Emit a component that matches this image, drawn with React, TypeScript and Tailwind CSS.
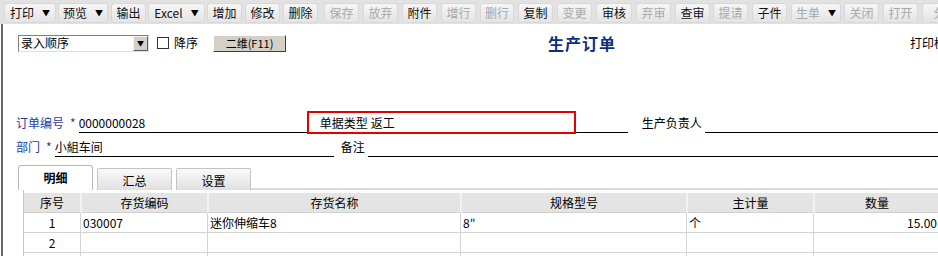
const font = { fontFamily: '"Noto Sans CJK SC", "Liberation Sans", sans-serif' };

type Btn = { label: string; w: number; ml: number; on: boolean; arrow?: boolean };

const buttons: Btn[] = [
  { label: "打印", w: 52, ml: 4, on: true, arrow: true },
  { label: "预览", w: 50, ml: 2, on: true, arrow: true },
  { label: "输出", w: 35, ml: 3, on: true },
  { label: "Excel", w: 57, ml: 2, on: true, arrow: true },
  { label: "增加", w: 35, ml: 2, on: true },
  { label: "修改", w: 35, ml: 3, on: true },
  { label: "删除", w: 35, ml: 3, on: true },
  { label: "保存", w: 35, ml: 6, on: false },
  { label: "放弃", w: 35, ml: 4, on: false },
  { label: "附件", w: 35, ml: 4, on: true },
  { label: "增行", w: 35, ml: 4, on: false },
  { label: "删行", w: 34, ml: 4, on: false },
  { label: "复制", w: 35, ml: 4, on: true },
  { label: "变更", w: 35, ml: 4, on: false },
  { label: "审核", w: 36, ml: 4, on: true },
  { label: "弃审", w: 35, ml: 4, on: false },
  { label: "查审", w: 35, ml: 4, on: true },
  { label: "提请", w: 35, ml: 3, on: false },
  { label: "子件", w: 35, ml: 4, on: true },
  { label: "生单", w: 50, ml: 4, on: false, arrow: true },
  { label: "关闭", w: 35, ml: 3, on: false },
  { label: "打开", w: 35, ml: 4, on: false },
  { label: "分", w: 35, ml: 4, on: false },
];

function ToolButton({ b }: { b: Btn }) {
  return (
    <div
      className="flex h-[20px] shrink-0 items-center justify-center gap-[8px] rounded-[3px] border border-[#d8d8d8] bg-gradient-to-b from-[#f6f6f6] to-[#e4e4e4] text-[12px] font-normal"
      style={{ width: b.w, marginLeft: b.ml }}
    >
      <span className={b.on ? "text-[#111]" : "text-[#a8a8a8]"}>{b.label}</span>
      {b.arrow && <span className="text-[8px] text-black">▼</span>}
    </div>
  );
}

const cols = [
  { title: "序号", w: 56 },
  { title: "存货编码", w: 127 },
  { title: "存货名称", w: 253 },
  { title: "规格型号", w: 226 },
  { title: "主计量", w: 127 },
  { title: "数量", w: 126 },
];

const rows = [
  ["1", "030007", "迷你伸缩车8", "8″", "个", "15.00"],
  ["2", "", "", "", "", ""],
  ["", "", "", "", "", ""],
];

export default function App() {
  return (
    <div className="h-[256px] w-[938px] overflow-hidden whitespace-nowrap bg-white text-[12px] text-black" style={font}>
      {/* toolbar */}
      <div className="flex h-[24px] items-center overflow-hidden bg-[#e2e2e2] pt-[1px]">
        {buttons.map((b) => (
          <ToolButton key={b.label} b={b} />
        ))}
      </div>

      <div className="relative ml-[1px] h-[232px] border-l-2 border-[#6a6a6a]">
        {/* top controls */}
        <div className="flex h-[30px] items-center pt-[8px]">
          <div className="ml-[15px] flex h-[17px] w-[131px] shrink-0 items-center border border-t-[#808080] border-l-[#808080] border-b-[#e0e0e0] border-r-[#e0e0e0] bg-white">
            <span className="flex-1 pl-[2px] leading-none">录入顺序</span>
            <span className="flex h-[15px] w-[15px] items-center justify-center border border-t-[#f4f4f4] border-l-[#f4f4f4] border-b-[#606060] border-r-[#606060] bg-[#d4d0c8] text-[7px]">▼</span>
          </div>
          <div className="ml-[8px] h-[12px] w-[12px] shrink-0 border border-[#333] bg-white" />
          <span className="ml-[5px] shrink-0">降序</span>
          <div className="ml-[15px] flex h-[17px] w-[73px] shrink-0 items-center justify-center border border-t-[#ffffff] border-l-[#ffffff] border-b-[#404040] border-r-[#404040] bg-[#d4d0c8] text-[11px]">
            二维(F11)
          </div>
          <span className="ml-[262px] shrink-0 text-[16px] font-bold tracking-[1px] text-[#0b2f7c]">生产订单</span>
          <span className="ml-[294px] shrink-0">打印模版</span>
        </div>

        {/* form row 1 */}
        <div className="mt-[55px] flex h-[24px] items-end">
          <span className="ml-[13px] mb-[1px] shrink-0 text-[#1c3e9c]">订单编号</span>
          <span className="ml-[6px] mb-[1px] shrink-0 text-[#1c3e9c]">*</span>
          <div className="ml-[3px] h-[18px] w-[234px] shrink-0 border-b border-black leading-[16px]">0000000028</div>
          <span className="ml-[7px] mb-[1px] shrink-0">单据类型</span>
          <div className="ml-[3px] h-[18px] w-[257px] shrink-0 border-b border-black leading-[16px]">返工</div>
          <span className="ml-[14px] mb-[1px] shrink-0">生产负责人</span>
          <div className="ml-[3px] h-[18px] w-[235px] shrink-0 border-b border-black" />
        </div>

        {/* form row 2 */}
        <div className="flex h-[24px] items-end">
          <span className="ml-[13px] mb-[1px] shrink-0 text-[#1c3e9c]">部门</span>
          <span className="ml-[6px] mb-[1px] shrink-0 text-[#1c3e9c]">*</span>
          <div className="ml-[3px] h-[18px] w-[279px] shrink-0 border-b border-black leading-[16px]">小組车间</div>
          <span className="ml-[7px] mb-[1px] shrink-0">备注</span>
          <div className="ml-[3px] h-[18px] flex-1 border-b border-black" />
        </div>

        {/* red highlight */}
        <div className="absolute left-[304px] top-[87px] h-[23px] w-[269px] border-2 border-[#e60000]" />

        {/* tabs */}
        <div className="mt-[8px] flex items-end pl-[15px]">
          <div className="flex h-[25px] w-[75px] shrink-0 items-center justify-center rounded-t-[3px] border border-b-0 border-[#b8b8b8] bg-white font-bold">
            明细
          </div>
          <div className="ml-[4px] flex h-[22px] w-[75px] shrink-0 items-center justify-center rounded-t-[2px] border border-b-0 border-[#c4c4c4] bg-gradient-to-b from-[#fafafa] to-[#e0e0e0] pt-[3px]">
            汇总
          </div>
          <div className="ml-[4px] flex h-[22px] w-[75px] shrink-0 items-center justify-center rounded-t-[2px] border border-b-0 border-[#c4c4c4] bg-gradient-to-b from-[#fafafa] to-[#e0e0e0] pt-[3px]">
            设置
          </div>
          <div className="flex-1 border-b-2 border-[#d8d8d8]" />
        </div>

        {/* table */}
        <div className="ml-[20px] border-l border-[#c8c8c8] pt-[3px]">
          <div className="flex h-[20px] bg-[#e4e4e4]">
            {cols.map((c, i) => (
              <div
                key={c.title}
                className={`flex shrink-0 items-center justify-center border-b border-[#d0d0d0] ${i > 0 ? "border-l-2 border-l-[#f2f2f2]" : ""}`}
                style={{ width: c.w }}
              >
                {c.title}
              </div>
            ))}
          </div>
          {rows.map((r, ri) => (
            <div key={ri} className="flex h-[20px]">
              {r.map((v, ci) => (
                <div
                  key={ci}
                  className={`flex shrink-0 items-center border-b border-[#d4d4d4] ${ci === 0 ? "justify-center" : "border-l border-l-[#d4d4d4] px-[2px]"} ${ci === 5 ? "justify-end" : ""}`}
                  style={{ width: cols[ci].w }}
                >
                  {v}
                </div>
              ))}
            </div>
          ))}
        </div>
      </div>
    </div>
  );
}
